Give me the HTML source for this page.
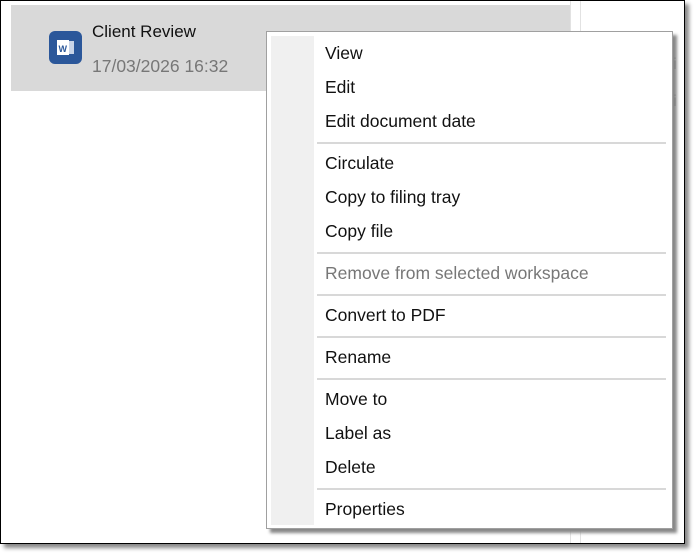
<!DOCTYPE html>
<html><head><style>
body{margin:0;width:696px;height:558px;background:#fff;position:relative;overflow:hidden;font-family:"Liberation Sans",sans-serif}
.frame{position:absolute;left:0;top:0;width:683px;height:542px;border:1px solid #000;box-shadow:4px 4px 4px #888;background:#fff}
.sel{position:absolute;left:10px;top:4px;width:559px;height:86px;background:#d9d9d9}
.vl{position:absolute;top:0;width:1px;height:542px;background:#e2e2e2}
.icon{position:absolute;left:48px;top:30px;width:33px;height:33px;border-radius:6px;background:#2b579a}
.t1{position:absolute;left:91px;top:21px;font-size:17px;color:#111}
.t2{position:absolute;left:91px;top:55px;font-size:17.5px;color:#777}
.menu{position:absolute;left:266px;top:31px;width:405px;height:496px;border:1px solid #a0a0a0;background:#fff;box-shadow:4px 4px 3px #888}
.gut{position:absolute;left:4px;top:4px;width:43px;height:489px;background:#f0f0f0}
.it{position:absolute;left:58px;font-size:17.5px;color:#111;line-height:20px}
.dis{color:#777}
.sep{position:absolute;left:50px;width:349px;height:2px;background:#d8d8d8}
</style></head><body>
<div class="frame">
<div class="sel"></div>
<div class="vl" style="left:569px"></div><div class="vl" style="left:579px"></div>
<div class="icon"><svg width="33" height="33"><rect x="8" y="9" width="12" height="15" fill="#fff"/><text x="9.5" y="21" font-size="9" font-weight="bold" fill="#2b579a" font-family="Liberation Sans">W</text><rect x="20" y="10" width="5" height="13" fill="#c8d4e8"/></svg></div>
<div class="t1">Client Review</div>
<div class="t2">17/03/2026 16:32</div>
<div style="position:absolute;left:672px;top:55px;font-size:16px;color:#111">i</div>
<div style="position:absolute;left:672px;top:92px;font-size:16px;color:#111">i</div>
</div>
<div class="menu">
<div class="gut"></div>
<div class="it" style="top:11px">View</div>
<div class="it" style="top:45px">Edit</div>
<div class="it" style="top:79px">Edit document date</div>
<div class="sep" style="top:110px"></div>
<div class="it" style="top:121px">Circulate</div>
<div class="it" style="top:155px">Copy to filing tray</div>
<div class="it" style="top:189px">Copy file</div>
<div class="sep" style="top:220px"></div>
<div class="it dis" style="top:231px">Remove from selected workspace</div>
<div class="sep" style="top:262px"></div>
<div class="it" style="top:273px">Convert to PDF</div>
<div class="sep" style="top:304px"></div>
<div class="it" style="top:315px">Rename</div>
<div class="sep" style="top:346px"></div>
<div class="it" style="top:357px">Move to</div>
<div class="it" style="top:391px">Label as</div>
<div class="it" style="top:425px">Delete</div>
<div class="sep" style="top:456px"></div>
<div class="it" style="top:467px">Properties</div>
</div>
</body></html>
